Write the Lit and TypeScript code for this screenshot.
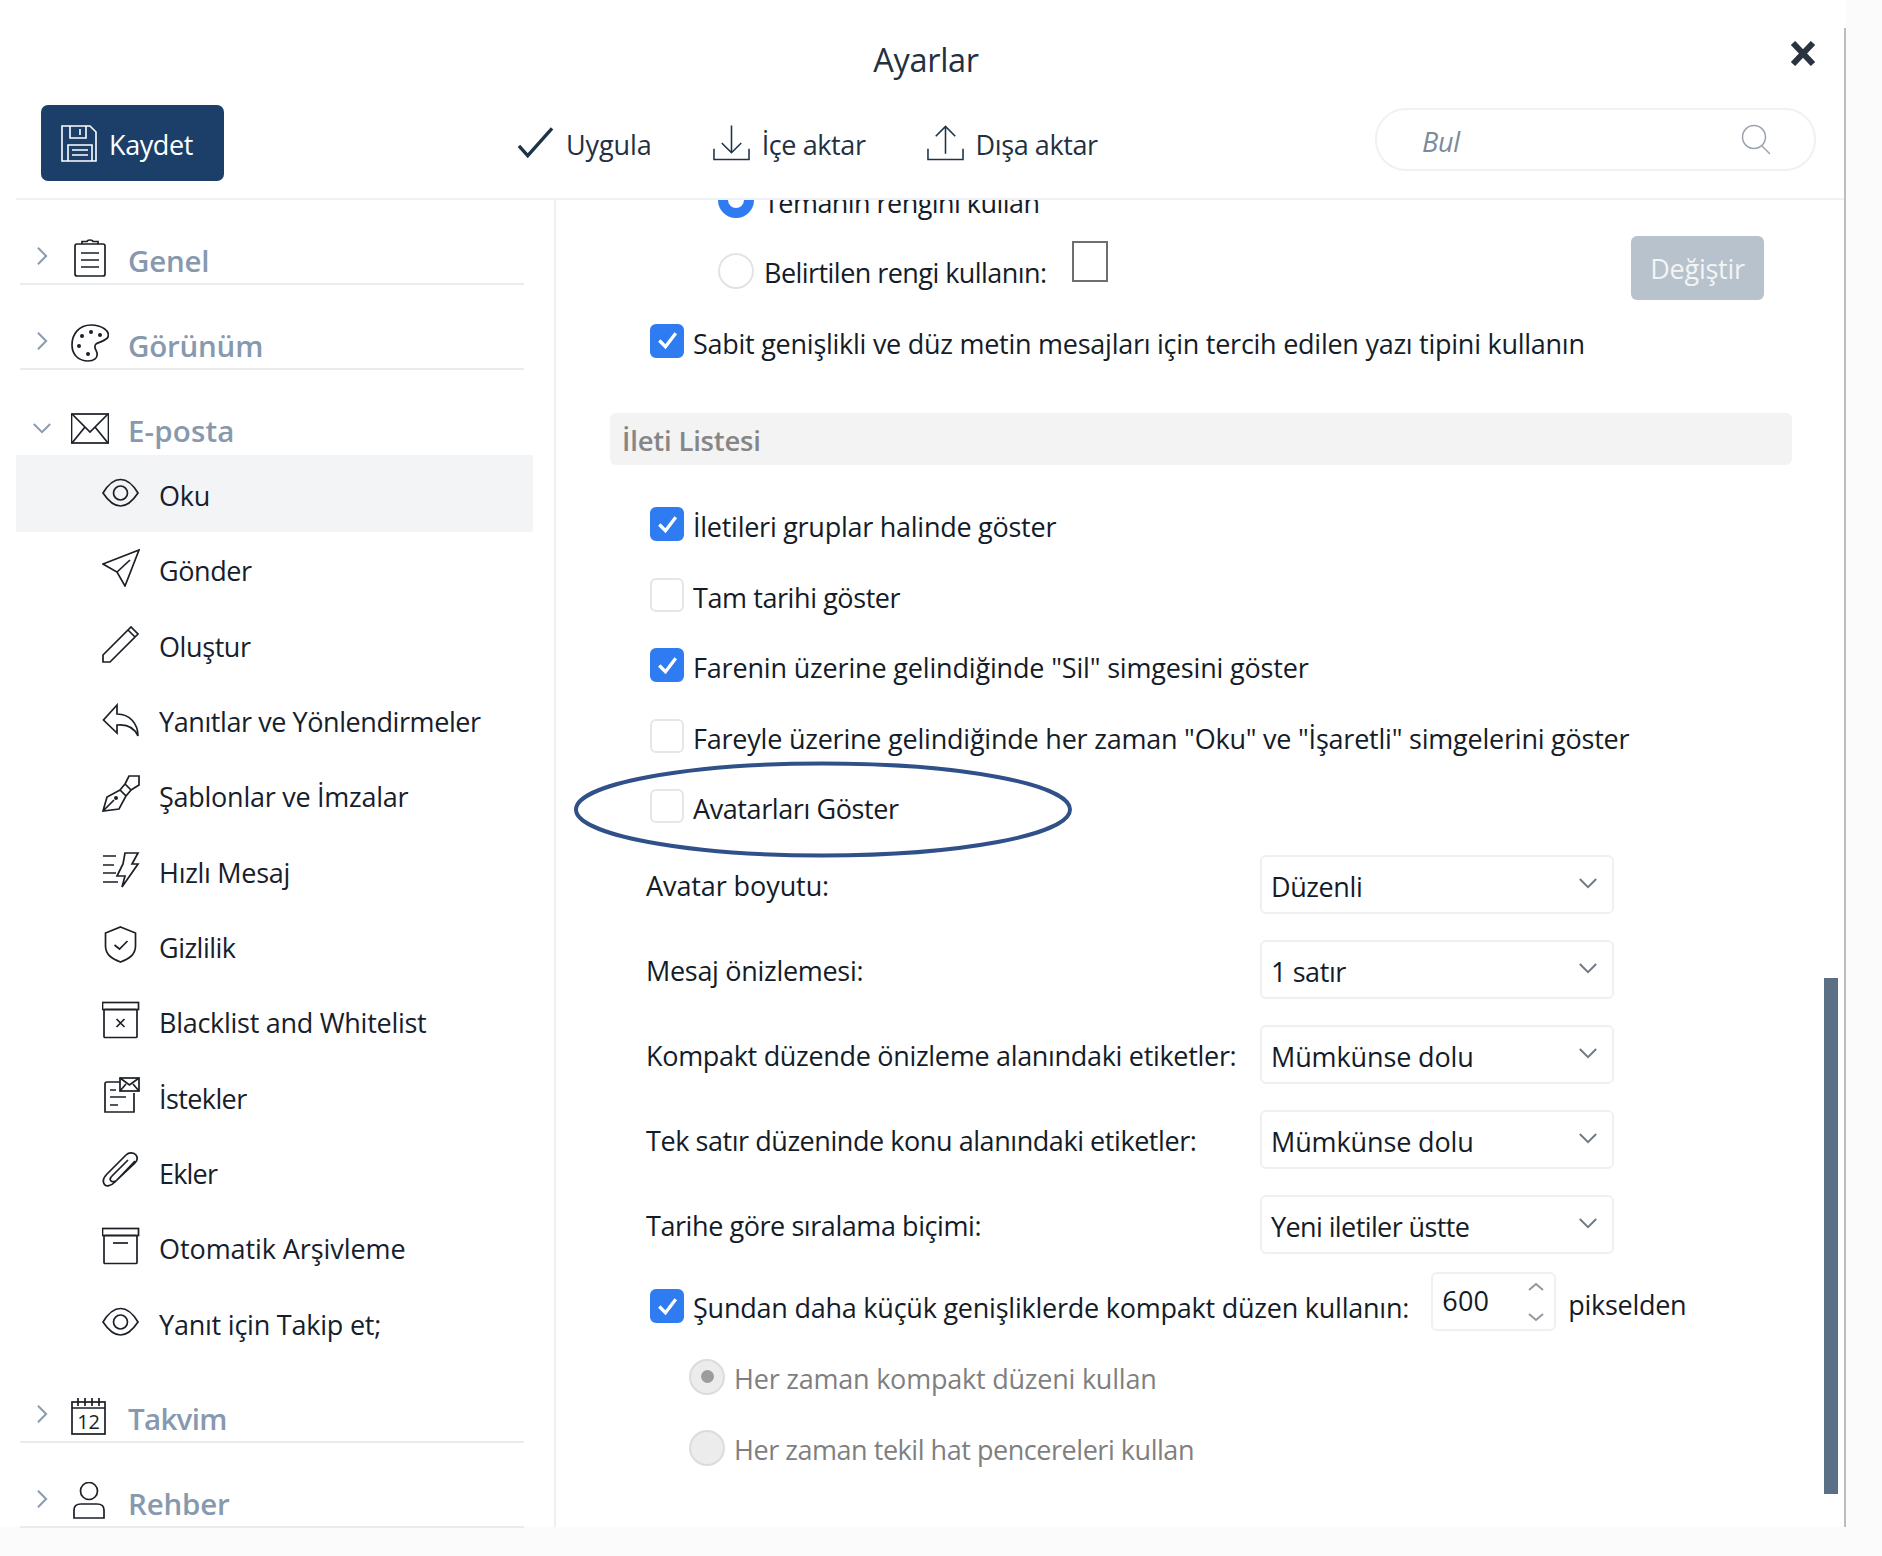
import { LitElement, html, css, svg } from "lit";
import { customElement } from "lit/decorators.js";
import { styleMap } from "lit/directives/style-map.js";

const ic: Record<string, any> = {
  clip: svg`<rect x="4" y="5" width="30" height="32" rx="2"/><path d="M11 5V2.500h5C16.500 0.500 21.500 0.500 22 2.500h5V5M10 14h18M10 21h18M10 28h18"/>`,
  palette: svg`<path d="M20 1C8 1 1 10 1 21c0 10 7 16 16 16 6 0 10-3 9-8-1-4-4-6-1-9 3-2 10-3 12-7 2-6-6-12-17-12Z"/><circle cx="11" cy="12" r="2" class="f"/><circle cx="20" cy="8" r="2" class="f"/><circle cx="29" cy="11" r="2" class="f"/><circle cx="8" cy="22" r="2" class="f"/><circle cx="17" cy="30" r="2" class="f"/>`,
  mail: svg`<rect x="0.500" y="5" width="37" height="29"/><path d="M1 5l18 18L37 5M1 34l13-16M37 34L24 18"/>`,
  eye: svg`<path d="M1 19C7 9 12 5.500 18.500 5.500S30 9 36 19c-6 9-11 13-17.500 13S7 28 1 19Z"/><circle cx="18.500" cy="19" r="7"/>`,
  send: svg`<path d="M1 15L37 1 23 37 15 23Z"/><path d="M15 23L28 11"/>`,
  pencil: svg`<path d="M1 37V30L29 2l7 7L8 37ZM26 5l7 7"/>`,
  reply: svg`<path d="M15 5L1.500 20 15 33V25c9-1 17 2 21 11 0-12-8-22-21-22Z"/>`,
  pen: svg`<path d="M1 36l4-14 13-7 6 6-7 13ZM1 36l11-11M18 15l5-6 6 6-5 6M23 9l4-8h10v9l-8 5"/><circle cx="14" cy="23" r="2" class="f"/>`,
  bolt: svg`<path d="M1 5h13M1 14h11M1 22h13M1 31h15M20 36l3-11h-8L21 13l2-11h13l-6 11h6Z"/>`,
  shield: svg`<path d="M18.500 1l15 6v13c0 9-7 13-15 16C10.500 33 3.500 29 3.500 20V7Z"/><path d="M12.500 19l5 4 8-8"/>`,
  boxx: svg`<rect x="0.500" y="1.500" width="36" height="7"/><rect x="2" y="8.500" width="33" height="28" rx="1"/><path d="M14.500 18l8 8M22.500 18l-8 8"/>`,
  req: svg`<path d="M18 5H5a2 2 0 0 0-2 2v28h29V16"/><rect x="18" y="1" width="19" height="13"/><path d="M18 1l9.500 7L37 1M18 14l6-7M37 14l-6-7M8 13h6M8 20h16M8 28h8"/>`,
  paper: svg`<path d="M33 9L13 30c-4 4-9 5-10.500 2.500C0 29 2 25 5 22L24 3c3-3 8-2.500 10 0 2 3 1 6-1 8L15 28c-2 2-5 2-6 1s-1-3 1-5L26 8"/>`,
  box: svg`<rect x="0.500" y="1.500" width="36" height="7"/><rect x="2" y="8.500" width="33" height="28" rx="1"/><path d="M11 16h15"/>`,
  cal: svg`<rect x="1" y="5" width="33" height="32"/><path d="M1 11h33M7 1v8M14 1v8M21 1v8M28 1v8"/>`,
  user: svg`<circle cx="18" cy="9" r="8.500"/><path d="M3 36V28c0-4 3-6 7-6h16c4 0 7 2 7 6v8Z"/>`,
};

const icon = (n: string) => html`<svg class="ic" viewBox="0 0 38 38">${ic[n]}</svg>`;

const chevR = html`<svg class="chev" viewBox="0 0 14 22"><path d="M2 2l9 9-9 9"/></svg>`;
const chevD = html`<svg class="chev" viewBox="0 0 22 14"><path d="M2 2l9 9 9-9"/></svg>`;
const tick = html`<svg viewBox="0 0 33 33"><path d="M9 17l6 6 10-13"/></svg>`;

const ls = (v: number) => styleMap({ letterSpacing: `${v}px` });

const subs: [string, string, number][] = [
  ["eye", "Oku", -0.28], ["send", "Gönder", -0.4], ["pencil", "Oluştur", -0.4], ["reply", "Yanıtlar ve Yönlendirmeler", -0.42],
  ["pen", "Şablonlar ve İmzalar", -0.26], ["bolt", "Hızlı Mesaj", -0.28], ["shield", "Gizlilik", -0.5],
  ["boxx", "Blacklist and Whitelist", -0.28], ["req", "İstekler", -0.6], ["paper", "Ekler", -0.8],
  ["box", "Otomatik Arşivleme", -0.08], ["eye", "Yanıt için Takip et;", -0.22],
];

const selects: [string, number, string, number][] = [
  ["Avatar boyutu:", -0.09, "Düzenli", -0.4],
  ["Mesaj önizlemesi:", -0.3, "1 satır", -0.4],
  ["Kompakt düzende önizleme alanındaki etiketler:", -0.31, "Mümkünse dolu", -0.12],
  ["Tek satır düzeninde konu alanındaki etiketler:", -0.44, "Mümkünse dolu", -0.12],
  ["Tarihe göre sıralama biçimi:", -0.43, "Yeni iletiler üstte", -0.6],
];

const checks: [boolean, string, number][] = [
  [true, "İletileri gruplar halinde göster", -0.26],
  [false, "Tam tarihi göster", -0.42],
  [true, 'Farenin üzerine gelindiğinde "Sil" simgesini göster', -0.17],
  [false, 'Fareyle üzerine gelindiğinde her zaman "Oku" ve "İşaretli" simgelerini göster', -0.22],
  [false, "Avatarları Göster", -0.4],
];

@customElement("app-root")
export class AppRoot extends LitElement {
  static styles = css`
    :host { display: block; width: 1882px; height: 1556px; background: #fbfbfb; overflow: hidden;
      font-family: "Open Sans", "Noto Sans", sans-serif; color: #141c28; font-size: 27px; letter-spacing: -0.26px; }
    * { box-sizing: border-box; }
    .shell { position: relative; width: 1846px; height: 1527px; background: #fff; display: flex; flex-direction: column; }
    .shell::after { content: ""; position: absolute; right: 0; top: 28px; bottom: 0; width: 2px; background: #b9bcc0; }
    .title { height: 105px; display: grid; grid-template-columns: 1fr auto 1fr; padding: 36px 0 0 6px; }
    .title h1 { margin: 0; font-size: 32.5px; font-weight: 400; line-height: 48px; letter-spacing: -0.3px; color: #22303f; grid-column: 2; }
    .close { grid-column: 3; justify-self: end; margin: 5px 30px 0 0; width: 26px; height: 25px; }
    .close path { stroke: #2a3440; stroke-width: 6; fill: none; }
    .bar { height: 95px; margin-left: 16px; padding-bottom: 18px; border-bottom: 2px solid #eef1f5; display: flex; }
    .save { margin-left: 25px; width: 183px; height: 76px; background: #1c3f69; color: #fff; border-radius: 7px; letter-spacing: -0.4px;
      display: flex; align-items: center; padding-left: 19px; gap: 11px; }
    .save span { margin-top: 2px; }
    .save svg { width: 38px; height: 40px; fill: none; stroke: #fff; stroke-width: 1.6; }
    .tools { margin-left: 293px; display: flex; gap: 61px; align-items: center; height: 76px; letter-spacing: -0.1px; }
    .tool { display: flex; align-items: center; gap: 12px; color: #22303f; }
    .tool span { margin-top: 3px; }
    .tool svg { width: 37px; height: 38px; fill: none; stroke: #1c3448; stroke-width: 1.6; }
    .tool svg.chk { stroke-width: 3.4; }
    .search { margin-left: auto; margin-right: 30px; margin-top: 3px; width: 441px; height: 63px; border: 2px solid #eef1f5; border-radius: 31px;
      display: flex; align-items: center; justify-content: space-between; padding: 0 42px 0 45px; font-style: italic; color: #7d8a99; }
    .search span { margin-top: 4px; }
    .search svg { width: 31px; height: 31px; fill: none; stroke: #9aa3ad; stroke-width: 1.5; }
    .body { flex: 1; display: flex; min-height: 0; }
    .side { width: 554px; padding: 24px 0 0 16px; flex: none; }
    .head { width: 504px; height: 61px; margin: 0 0 24px 4px; border-bottom: 2px solid #e9ecef; display: flex; align-items: center; position: relative; }
    .head.open { border-bottom: 0; margin-bottom: 0; }
    .head .chev { position: absolute; left: 16px; top: 22px; width: 13px; height: 20px; fill: none; stroke: #8a9bb0; stroke-width: 2.2; }
    .head.open .chev { left: 12px; top: 28px; width: 20px; height: 13px; }
    .head .ic { position: absolute; left: 51px; top: 15px; width: 38px; height: 38px; }
    .head b { margin-left: 108px; margin-top: 14px; font-size: 29.5px; font-weight: 600; color: #8799ae; letter-spacing: -0.2px; }
    .head.open b { margin-top: 12px; letter-spacing: 0.15px; }
    .head b.cal { letter-spacing: -0.7px; }
    .ic { fill: none; stroke: #1b1f26; stroke-width: 1.7; flex: none; }
    .ic .f { fill: #1b1f26; stroke: none; }
    .sub { height: 75.33px; width: 517px; display: flex; align-items: center; position: relative; padding: 6px 0 0 143px; color: #16202c; }
    .sub.on { background: #f3f4f6; box-shadow: 0 2px 0 #f3f4f6; }
    .sub .ic { position: absolute; left: 86px; top: 19px; width: 38px; height: 38px; }
    .gap { height: 23px; }
    .main { flex: 1; position: relative; overflow: hidden; min-width: 0; border-left: 2px solid #eef0f2; }
    .inner { margin-top: -33px; padding-left: 1px; }
    .row { height: 70.5px; display: flex; align-items: center; }
    .r1 { padding-left: 161px; gap: 10px; letter-spacing: -0.55px; }
    .r2 { padding-left: 93px; gap: 9px; }
    .r3 { padding-left: 132px; gap: 9px; color: #7f7f7f; height: 71px; }
    .radio { width: 36px; height: 36px; border-radius: 50%; border: 2.5px solid #e3e3e3; background: #fff; flex: none; margin-top: -4px; }
    .radio.on { border: 10px solid #2f7bf2; }
    .radio.dis { background: #ececec; border-color: #dcdcdc; display: flex; align-items: center; justify-content: center; }
    .radio.dis i { width: 13px; height: 13px; border-radius: 50%; background: #9c9c9c; }
    .cb { width: 34px; height: 34px; border-radius: 6px; border: 2.5px solid #e6e6e6; background: #fff; flex: none; margin-top: -5px; }
    .cb.on { background: #2f7bf2; border-color: #2f7bf2; }
    .cb svg { display: block; margin: -2.5px; width: 34px; height: 34px; fill: none; stroke: #fff; stroke-width: 3.2; }
    .swatch { width: 36px; height: 41px; border: 2px solid #6e6e6e; margin: -22px 0 0 15px; flex: none; }
    .btn { margin-left: auto; margin-right: 82px; width: 133px; height: 64px; border-radius: 6px; background: #b8c2cc; color: #f2f4f6; letter-spacing: -0.26px;
      display: flex; align-items: center; justify-content: center; margin-top: -10px; padding-top: 2px; }
    .sec { margin: 34px 54px 27px 53px; height: 52px; border-radius: 6px; background: #f3f3f3; color: #868686; font-weight: 600;
      display: flex; align-items: center; padding: 4px 0 0 12px; font-size: 27.5px; letter-spacing: -0.2px; }
    .form { margin-top: 11px; display: flex; flex-direction: column; gap: 26px; }
    .frow { height: 59px; display: flex; align-items: center; padding-left: 89px; }
    .frow label { width: 614px; flex: none; margin-top: 1px; }
    .sel { width: 354px; height: 59px; border: 2px solid #eef0f3; border-radius: 6px; display: flex; align-items: center; justify-content: space-between;
      padding: 0 14px 0 9px; }
    .sel svg { width: 20px; height: 13px; fill: none; stroke: #6f7a86; stroke-width: 2.2; margin-top: -3px; }
    .sel span { margin-top: 4px; }
    .cmp { margin-top: 18px; height: 59px; display: flex; align-items: center; padding-left: 93px; gap: 9px; }
    .cmp .cb { margin-top: 9px; }
    .cmp .t { margin-top: 12px; letter-spacing: -0.23px; }
    .num { margin-left: 13px; width: 125px; height: 59px; border: 2px solid #eef0f3; border-radius: 6px; display: flex; align-items: center; justify-content: space-between; padding: 0 8px 2px 9px; flex: none; letter-spacing: 0.3px; }
    .num svg { width: 20px; height: 40px; fill: none; stroke: #9098a2; stroke-width: 2; margin-top: 2px; }
    .px { margin: 6px 0 0 3px; }
    .rad { margin-top: 12px; }
    .ellipse { position: absolute; left: 17px; top: 561px; width: 500px; height: 97px; pointer-events: none; }
    .ellipse ellipse { fill: none; stroke: #2f5088; stroke-width: 4; }
    .thumb { position: absolute; left: 1268px; top: 778px; width: 14px; height: 516px; background: #5b7086; }
    .tight { letter-spacing: -0.4px; }
  `;

  render() {
    const head = (n: string, t: string, open = false) =>
      html`<div class="head ${open ? "open" : ""}">${open ? chevD : chevR}${icon(n)}<b>${t}</b></div>`;
    return html`<div class="shell">
      <div class="title"><h1>Ayarlar</h1>
        <svg class="close" viewBox="0 0 26 25"><path d="M3 2l20 21M23 2L3 23"/></svg></div>
      <div class="bar">
        <div class="save">
          <svg viewBox="0 0 38 40"><path d="M2 3h28l6 6v29H2Z"/><path d="M10 3v12h16V3M20 6v6M8 38V22h24v16M12 27h16M12 32h16"/></svg>
          <span>Kaydet</span></div>
        <div class="tools">
          <div class="tool"><svg class="chk" viewBox="0 0 38 38"><path d="M2 22l9 10L36 4"/></svg><span>Uygula</span></div>
          <div class="tool"><svg viewBox="0 0 38 38"><path d="M1 25v11h36V25M19 1v27M9 19l10 10 10-10"/></svg><span class="tight">İçe aktar</span></div>
          <div class="tool"><svg viewBox="0 0 38 38"><path d="M1 25v11h36V25M19 30V3M9 12L19 2l10 10"/></svg><span class="tight">Dışa aktar</span></div>
        </div>
        <div class="search"><span>Bul</span><svg viewBox="0 0 31 31"><circle cx="13" cy="13" r="11.500"/><path d="M21 22l8 8"/></svg></div>
      </div>
      <div class="body">
        <div class="side">
          ${head("clip", "Genel")}${head("palette", "Görünüm")}${head("mail", "E-posta", true)}
          ${subs.map(([n, t, s], i) => html`<div class="sub ${i === 0 ? "on" : ""}">${icon(n)}<span style=${ls(s)}>${t}</span></div>`)}
          <div class="gap"></div>
          <div class="head">${chevR}<svg class="ic" viewBox="0 0 38 38">${ic.cal}<text x="17.500" y="32" text-anchor="middle" font-size="20" font-family="Open Sans" fill="#1b1f26" stroke="none">12</text></svg><b class="cal">Takvim</b></div>
          ${head("user", "Rehber")}
        </div>
        <div class="main">
          <div class="inner">
            <div class="row r1"><span class="radio on"></span><span>Temanın rengini kullan</span></div>
            <div class="row r1"><span class="radio"></span><span>Belirtilen rengi kullanın:</span><span class="swatch"></span><span class="btn">Değiştir</span></div>
            <div class="row r2"><span class="cb on">${tick}</span><span>Sabit genişlikli ve düz metin mesajları için tercih edilen yazı tipini kullanın</span></div>
            <div class="sec">İleti Listesi</div>
            ${checks.map(([on, t, s]) => html`<div class="row r2"><span class="cb ${on ? "on" : ""}">${on ? tick : ""}</span><span style=${ls(s)}>${t}</span></div>`)}
            <div class="form">
              ${selects.map(([l, s1, v, s2]) => html`<div class="frow"><label style=${ls(s1)}>${l}</label><div class="sel"><span style=${ls(s2)}>${v}</span>${chevD}</div></div>`)}
            </div>
            <div class="cmp"><span class="cb on">${tick}</span><span class="t">Şundan daha küçük genişliklerde kompakt düzen kullanın:</span>
              <div class="num"><span>600</span><svg viewBox="0 0 20 40"><path d="M3 8l7-6 7 6M3 32l7 6 7-6"/></svg></div><span class="px">pikselden</span></div>
            <div class="rad">
              <div class="row r3"><span class="radio dis"><i></i></span><span style=${ls(-0.22)}>Her zaman kompakt düzeni kullan</span></div>
              <div class="row r3"><span class="radio dis"></span><span style=${ls(-0.46)}>Her zaman tekil hat pencereleri kullan</span></div>
            </div>
          </div>
          <svg class="ellipse" viewBox="0 0 500 97"><ellipse cx="250" cy="48.500" rx="247" ry="46"/></svg>
          <div class="thumb"></div>
        </div>
      </div>
    </div>`;
  }
}
